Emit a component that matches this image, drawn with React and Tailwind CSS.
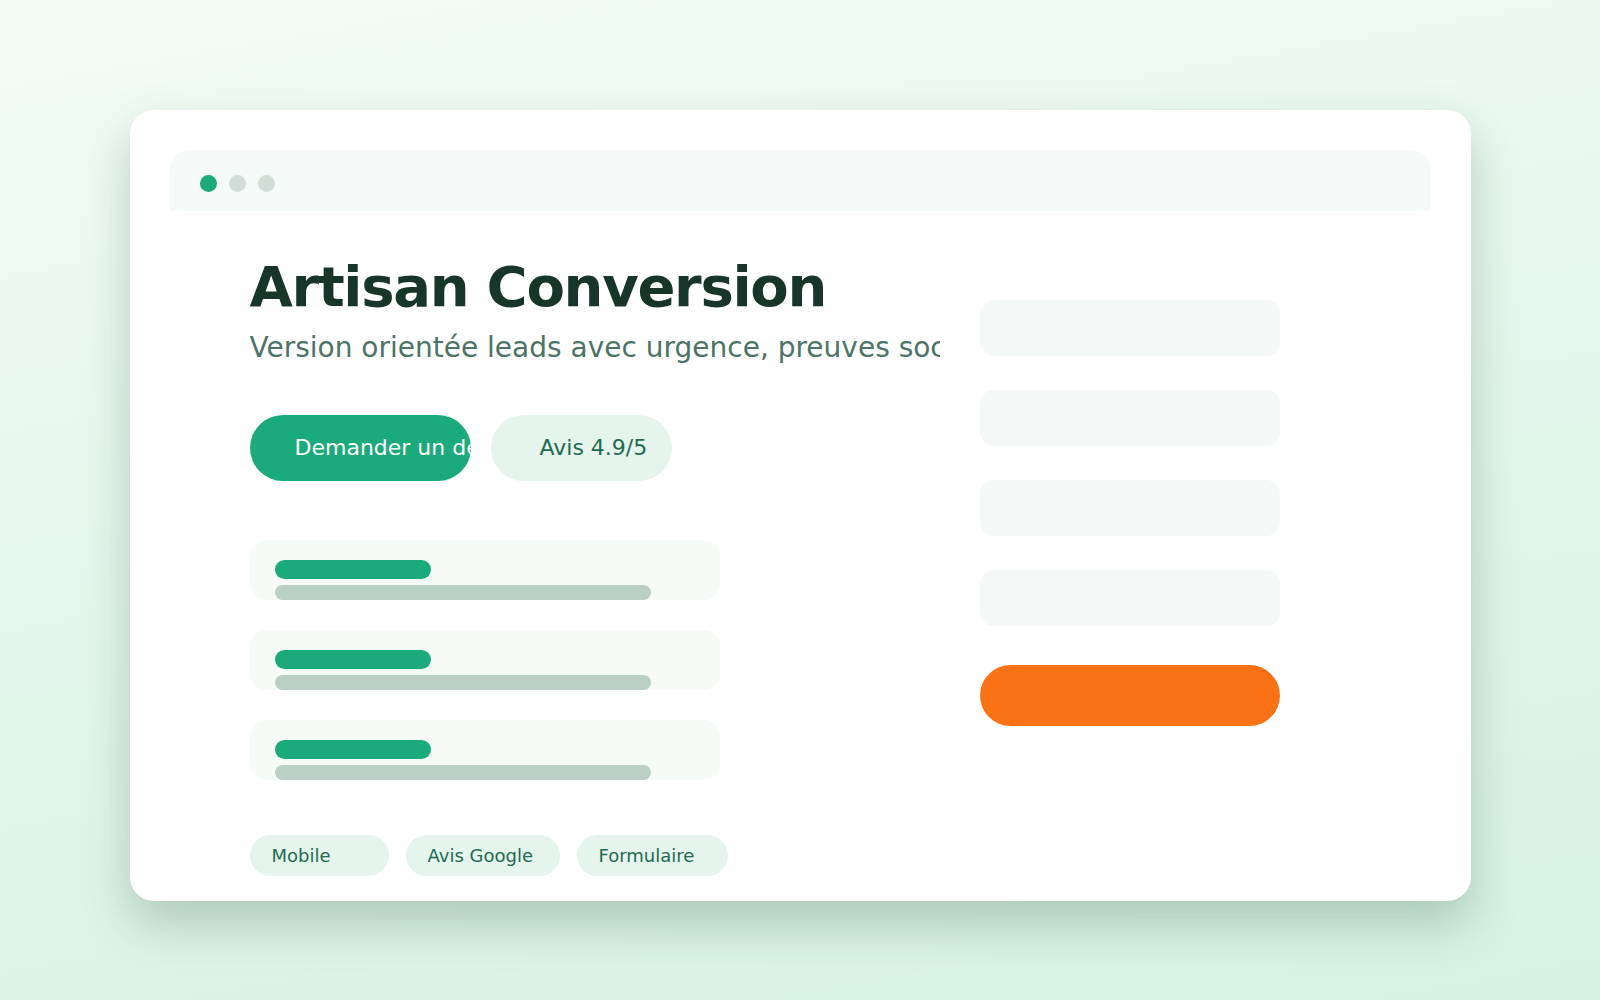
import React from "react";

const rows = [1, 2, 3];
const fields = [1, 2, 3, 4];
const chips = [
  { label: "Mobile", w: "w-[139px]" },
  { label: "Avis Google", w: "w-[154px]" },
  { label: "Formulaire", w: "w-[151px]" },
];

export default function App() {
  return (
    <div className="min-h-screen w-full bg-[linear-gradient(170deg,#f3fcf6_0%,#e6f7ed_45%,#d6f2e2_100%)] flex justify-center pt-[110px] font-['DejaVu_Sans',sans-serif]">
      <div className="w-[1341px] h-[791px] bg-white rounded-[24px] shadow-[0_22px_48px_rgba(30,70,50,0.25)] p-[40px] overflow-hidden">
        {/* window bar */}
        <div className="h-[61px] bg-[#f5faf8] rounded-t-[20px] flex items-center gap-[12px] pl-[30px] pt-[5px]">
          <span className="w-[17px] h-[17px] rounded-full bg-[#1aaa7b]" />
          <span className="w-[17px] h-[17px] rounded-full bg-[#d2ddd8]" />
          <span className="w-[17px] h-[17px] rounded-full bg-[#d2ddd8]" />
        </div>

        <div className="px-[80px] pt-[45px] grid grid-cols-[690px_300px] gap-x-[40px]">
          {/* left column */}
          <div className="min-w-0">
            <h1 className="text-[56px] font-bold leading-[1.1] tracking-[-0.023em] text-[#173528]">
              Artisan Conversion
            </h1>
            <p className="mt-[9px] text-[28px] leading-[1.5] text-[#4b7466] whitespace-nowrap overflow-hidden">
              Version orientée leads avec urgence, preuves sociales et formulaire court.
            </p>

            <div className="mt-[46px] flex gap-[20px]">
              <button className="w-[221px] h-[66px] rounded-full bg-[#1aaa7b] text-white text-[22px] pl-[45px] text-left whitespace-nowrap overflow-hidden">
                Demander un devis
              </button>
              <button className="w-[181px] h-[66px] rounded-full bg-[#e6f4ee] text-[#1f6b4f] text-[22px] pl-[49px] text-left whitespace-nowrap overflow-hidden">
                Avis 4.9/5
              </button>
            </div>

            <div className="mt-[59px] flex flex-col gap-[30px]">
              {rows.map((r) => (
                <div key={r} className="w-[470px] h-[60px] rounded-[16px] bg-[#f6fbf8] pt-[20px] px-[25px] flex flex-col gap-[6px]">
                  <div className="w-[156px] h-[19px] rounded-full bg-[#1aaa7b]" />
                  <div className="w-[376px] h-[15px] rounded-full bg-[#bad0c6]" />
                </div>
              ))}
            </div>

            <div className="mt-[55px] flex gap-[17px]">
              {chips.map((c) => (
                <span key={c.label} className={`${c.w} h-[41px] rounded-full bg-[#e6f4ee] text-[#1f6b4f] text-[18px] pl-[22px] pt-[1px] flex items-center whitespace-nowrap`}>
                  {c.label}
                </span>
              ))}
            </div>
          </div>

          {/* right column */}
          <div className="pt-[44px] flex flex-col">
            <div className="flex flex-col gap-[34px]">
              {fields.map((f) => (
                <div key={f} className="w-[300px] h-[56px] rounded-[14px] bg-[#f4f8f7]" />
              ))}
            </div>
            <div className="mt-[39px] w-[300px] h-[61px] rounded-full bg-[#f97316]" />
          </div>
        </div>
      </div>
    </div>
  );
}
